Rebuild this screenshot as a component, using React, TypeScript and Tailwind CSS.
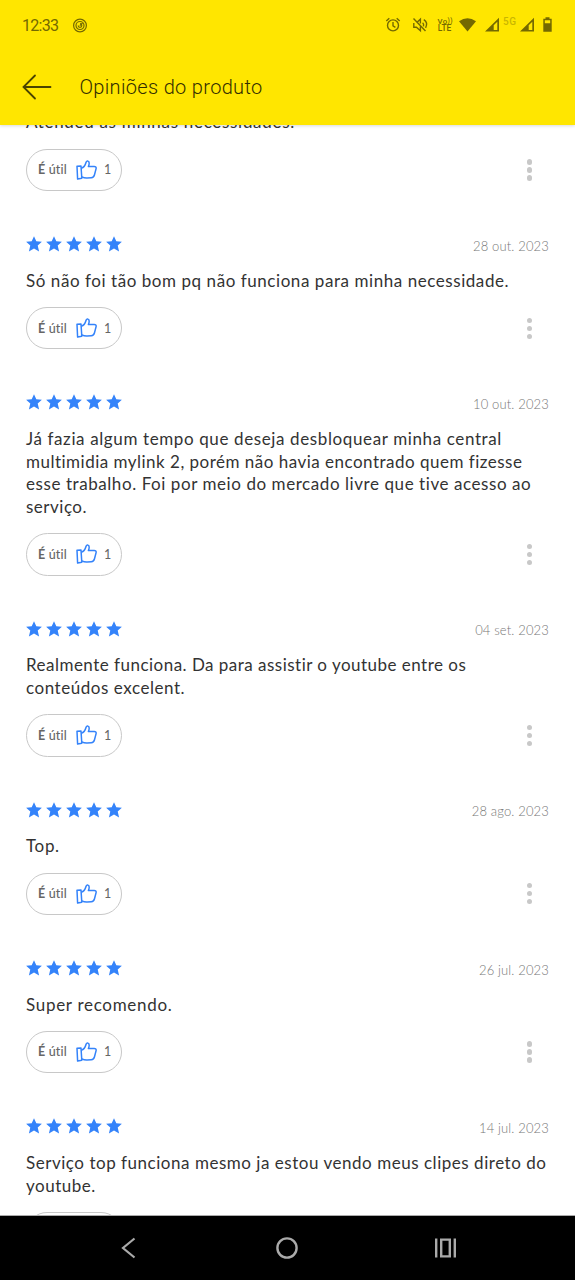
import React from "react";

interface Line {
  text: string;
  tracking: string;
}

interface ReviewProps {
  date?: string;
  lines: Line[];
}

const reviews: ReviewProps[] = [
  {
    lines: [{ text: "Atendeu as minhas necessidades.", tracking: "tracking-[0.7px]" }],
  },
  {
    date: "28 out. 2023",
    lines: [
      {
        text: "Só não foi tão bom pq não funciona para minha necessidade.",
        tracking: "tracking-[0.56px]",
      },
    ],
  },
  {
    date: "10 out. 2023",
    lines: [
      { text: "Já fazia algum tempo que deseja desbloquear minha central", tracking: "tracking-[0.62px]" },
      { text: "multimidia mylink 2, porém não havia encontrado quem fizesse", tracking: "tracking-[0.49px]" },
      { text: "esse trabalho. Foi por meio do mercado livre que tive acesso ao", tracking: "tracking-[0.57px]" },
      { text: "serviço.", tracking: "tracking-[0.5px]" },
    ],
  },
  {
    date: "04 set. 2023",
    lines: [
      { text: "Realmente funciona. Da para assistir o youtube entre os", tracking: "tracking-[0.48px]" },
      { text: "conteúdos excelent.", tracking: "tracking-[0.55px]" },
    ],
  },
  {
    date: "28 ago. 2023",
    lines: [{ text: "Top.", tracking: "tracking-[0.65px]" }],
  },
  {
    date: "26 jul. 2023",
    lines: [{ text: "Super recomendo.", tracking: "tracking-[0.7px]" }],
  },
  {
    date: "14 jul. 2023",
    lines: [
      { text: "Serviço top funciona mesmo ja estou vendo meus clipes direto do", tracking: "tracking-[0.53px]" },
      { text: "youtube.", tracking: "tracking-[0.5px]" },
    ],
  },
];

const StatusBar: React.FC = () => (
  <div className="flex h-[50px] items-center pr-[21px] pl-[22px] text-[#746900]">
    <span className="w-[51px] pt-px font-['Roboto',sans-serif] text-[16px] leading-none tracking-[-0.7px]">12:33</span>
    <svg width="15" height="15" viewBox="0 0 15 15" fill="none" stroke="currentColor" strokeWidth="1.2">
      <circle cx="7" cy="7.5" r="6.4" />
      <circle cx="7" cy="7.5" r="4" />
      <path d="M5.2 7.5a1.8 1.8 0 1 0 1.8-1.8M6.8 7.6l2.8-2.8" />
    </svg>
    <svg className="ml-auto" width="169" height="20" viewBox="0 0 169 20" fill="none" stroke="currentColor" strokeWidth="1.4">
      {/* Alarm */}
      <circle cx="8" cy="10.4" r="5.5" />
      <path d="M8 7v3.8l2.4 1.5M1.3 6l3-2.7M14.7 6l-3-2.7" />
      {/* Muted */}
      <path d="M28.5 3.5l12 12.5M28.8 8v4.2h2.6l4 3.6v-4.2M31.8 7.6l3.6-3.4v4.4M37.6 7.7c1 .8 1.3 2 .9 3.6M38.8 4.7c3 1.9 3.3 5.3 1.8 8.2" />
      {/* VoLTE */}
      <g fill="currentColor" stroke="none" fontFamily="Roboto, sans-serif" fontWeight="500">
        <text x="52.6" y="8.6" fontSize="7.8" textLength="9.5">Vo</text>
        <text x="62.5" y="7.7" fontSize="6.5" textLength="5">))</text>
        <text x="52.8" y="16.2" fontSize="8.4" textLength="13.5">LTE</text>
        <text x="118" y="10.4" fontSize="10" opacity="0.38" textLength="13">5G</text>
      </g>
      {/* Wi-Fi */}
      <path fill="currentColor" stroke="none" d="M74 6.3q8.5-6.1 17 0L82.5 16.5z" />
      {/* Signal */}
      <path fill="currentColor" stroke="none" d="M100 16.5L114 2.8v13.7zM108.7 10.2v4.8h3.6V6.7z" fillRule="evenodd" />
      <path fill="currentColor" stroke="none" d="M135 16.5L149 2.8v13.7zM143.7 10.2v4.8h3.6V6.7z" fillRule="evenodd" />
      {/* Battery */}
      <path
        fill="currentColor"
        stroke="none"
        fillRule="evenodd"
        d="M160.5 2.2h4v1.6h2.2v13h-8.4v-13h2.2zM159.8 5.3v2.9h5.4V5.3z"
      />
    </svg>
  </div>
);

const Header: React.FC = () => (
  <header className="relative z-10 h-[125px] shrink-0 bg-[#ffe600] shadow-[0_1px_3px_rgba(0,0,0,0.15)]">
    <StatusBar />
    <div className="flex h-[74px] items-center pl-[22px]">
      <svg width="30" height="26" viewBox="0 0 30 26" fill="none" stroke="#4a4300" strokeWidth="1.8" strokeLinecap="round">
        <path d="M28.5 13H1.5M13 1.5L1.5 13L13 24.5" />
      </svg>
      <h1 className="ml-[27.5px] font-['Roboto',sans-serif] text-[20px] leading-none font-light tracking-[0.33px] text-[#332e00]">
        Opiniões do produto
      </h1>
    </div>
  </header>
);

const Stars: React.FC = () => (
  <div className="flex gap-[4px]">
    {[0, 1, 2, 3, 4].map((i) => (
      <svg key={i} width="16" height="16" viewBox="0 0 16 16" fill="#3483fa">
        <path d="M8 .2l2.3 5.1 5.6.5-4.2 3.7 1.4 5.9L8 12.4l-5.1 3 1.4-5.9L.1 5.8l5.6-.5z" />
      </svg>
    ))}
  </div>
);

const UsefulButton: React.FC = () => (
  <button className="flex h-[42.4px] w-[95.5px] items-center rounded-full border border-[#c8c8c8] pl-[11px] text-[12.5px] text-[#666]">
    <span className="w-[38px] pt-[1.4px] text-left font-bold tracking-[0.2px] whitespace-nowrap">
      É <span className="font-medium [font-variant-ligatures:none]">útil</span>
    </span>
    <svg width="21" height="20" viewBox="0 0 21 20" fill="none" stroke="#3483fa" strokeWidth="1.5" strokeLinejoin="round">
      <path d="M1 6.2l4-.2.8 12.2-4.2.8z" />
      <path d="M5.2 8.4c2.3-.8 4-2.8 4.7-5.6.4-1.5 1.2-2.1 2-1.8 1.7.5 1.5 3 .5 5.6l5.8-.2c1.4 0 2.2.9 1.9 2.2l-1.6 6.2c-.5 2-1.5 2.9-3.2 3l-4.2.2c-2 .1-3.6-.3-5.3-1.2" />
    </svg>
    <span className="ml-[7px] pt-[1.4px]">1</span>
  </button>
);

const Review: React.FC<ReviewProps> = ({ date, lines }) => (
  <article className="mb-[44px]">
    {date && (
      <div className="mb-[16.6px] flex h-[18px] items-center justify-between">
        <Stars />
        <time className="pt-[5px] text-[13px] font-light tracking-[0.15px] text-[#777]">{date}</time>
      </div>
    )}
    <p className="text-[17px] leading-[22.6px] text-[#333]">
      {lines.map((line) => (
        <span key={line.text} className={`block whitespace-nowrap ${line.tracking}`}>
          {line.text}
        </span>
      ))}
    </p>
    <div className="mt-[14.8px] flex items-center justify-between pr-[17px]">
      <UsefulButton />
      <div className="flex flex-col gap-[2.6px]">
        <i className="size-[5.4px] rounded-full bg-[#c8c8c8]" />
        <i className="size-[5.4px] rounded-full bg-[#c8c8c8]" />
        <i className="size-[5.4px] rounded-full bg-[#c8c8c8]" />
      </div>
    </div>
  </article>
);

const NavBar: React.FC = () => (
  <nav className="grid h-[65px] shrink-0 grid-cols-3 items-center justify-items-center border-t border-[#aaa] bg-black pr-[50px] pl-[48px]">
    <svg width="24" height="24" viewBox="0 0 24 24" fill="none" stroke="#aaa" strokeWidth="2.2">
      <path d="M18.5 2.5L7 12l11.5 9.5" />
    </svg>
    <svg width="24" height="24" viewBox="0 0 24 24" fill="none" stroke="#aaa" strokeWidth="2.4">
      <circle cx="12" cy="12" r="9.6" />
    </svg>
    <svg width="24" height="24" viewBox="0 0 24 24" fill="none" stroke="#aaa" strokeWidth="2.4">
      <path d="M2.2 2.5v19M20.8 2.5v19M7.2 3.6h8.6v16.8H7.2z" />
    </svg>
  </nav>
);

export default function App() {
  return (
    <div className="flex h-[1280px] w-[575px] flex-col overflow-hidden bg-white font-['Lato',sans-serif]">
      <Header />
      <main className="min-h-0 flex-1 overflow-hidden">
        <div className="-mt-[13.7px] pr-[26px] pl-[26px]">
          {reviews.map((review, i) => (
            <Review key={i} {...review} />
          ))}
        </div>
      </main>
      <NavBar />
    </div>
  );
}
